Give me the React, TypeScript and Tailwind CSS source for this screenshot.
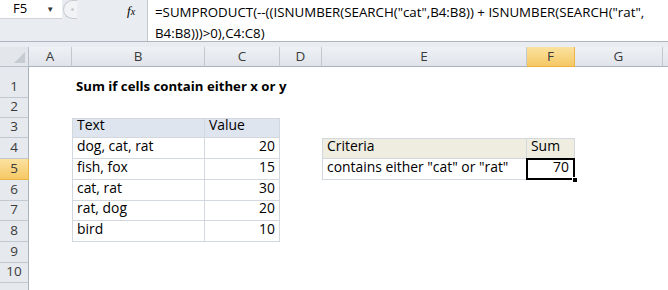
import React from "react";

const cols = [
  { k: "A", w: 43 },
  { k: "B", w: 133 },
  { k: "C", w: 75 },
  { k: "D", w: 42 },
  { k: "E", w: 205 },
  { k: "F", w: 48 },
  { k: "G", w: 88 },
  { k: "H", w: 40 },
];

const rowHeights = [31, 20, 20, 21, 21, 21, 20, 21, 21, 20, 20];

const font = { fontFamily: '"Open Sans", "Liberation Sans", sans-serif' };

function Cell({
  w,
  children,
  className = "",
}: {
  w: number;
  children?: React.ReactNode;
  className?: string;
}) {
  return (
    <div
      className={"shrink-0 flex items-end pb-[1px] px-[4px] overflow-visible whitespace-nowrap " + className}
      style={{ width: w }}
    >
      {children}
    </div>
  );
}

function rowContent(r: number) {
  const tblB = "border-r border-b border-[#d3d8df]";
  const data: Record<number, [string, string]> = {
    4: ["dog, cat, rat", "20"],
    5: ["fish, fox", "15"],
    6: ["cat, rat", "30"],
    7: ["rat, dog", "20"],
    8: ["bird", "10"],
  };
  return cols.map((c) => {
    let content: React.ReactNode = null;
    let cls = "";
    if (r === 1 && c.k === "B") {
      content = (
        <span className="font-bold text-[13.2px] text-black">
          Sum if cells contain either x or y
        </span>
      );
    }
    if (r === 3 && (c.k === "B" || c.k === "C")) {
      cls = "bg-[#dee5ef] border-r border-b border-[#d3d8df]" + (c.k === "B" ? " border-l border-t" : " border-t");
      content = <span>{c.k === "B" ? "Text" : "Value"}</span>;
    }
    if (r >= 4 && r <= 8 && c.k === "B") {
      cls = tblB + " border-l";
      content = <span>{data[r][0]}</span>;
    }
    if (r >= 4 && r <= 8 && c.k === "C") {
      cls = tblB + " justify-end";
      content = <span>{data[r][1]}</span>;
    }
    if (r === 4 && (c.k === "E" || c.k === "F")) {
      cls = "bg-[#eeede0] border-r border-b border-t border-[#d3d8df]" + (c.k === "E" ? " border-l" : "");
      content = <span>{c.k === "E" ? "Criteria" : "Sum"}</span>;
    }
    if (r === 5 && c.k === "E") {
      cls = tblB + " border-l";
      content = <span>contains either "cat" or "rat"</span>;
    }
    if (r === 5 && c.k === "F") {
      cls = "relative justify-end border-r border-b border-[#d3d8df]";
      content = (
        <>
          <span className="relative z-10 pr-[1px]">70</span>
          <div className="absolute left-[-1px] top-[-1px] right-[-1px] bottom-[-1px] border-2 border-black" />
          <div className="absolute right-[-4px] bottom-[-4px] w-[6px] h-[6px] bg-black border border-white z-20" />
        </>
      );
    }
    return (
      <Cell key={c.k} w={c.w} className={"text-[13.9px] text-black " + cls}>
        {content}
      </Cell>
    );
  });
}

export default function App() {
  return (
    <div className="w-[668px] h-[290px] overflow-hidden bg-white" style={font}>
      {/* Formula bar */}
      <div className="flex h-[42px] border-b border-[#aeb5be] bg-[#e9ecf0]">
        <div className="w-[147px] shrink-0 flex flex-col">
          <div className="flex h-[19px]">
            <div className="w-[62px] h-[19px] bg-white border-b border-[#cfd4da] flex items-center">
              <span className="ml-[13px] text-[13px] text-black">F5</span>
              <span className="ml-[19px] text-[8px] text-[#333]">▼</span>
            </div>
            <div className="flex-1 flex items-start relative">
              <div className="w-[14px] h-[19px] rounded-l-full border-l border-t border-b border-[#c8ccd2] bg-[#f2f3f5] flex items-center justify-center ml-[1px]">
                <div className="w-[3px] h-[3px] rounded-full bg-[#c9cdd3] ml-[3px]" />
              </div>
              <span className="absolute left-[65px] top-[1px] text-[13px] italic text-black" style={{ fontFamily: '"Liberation Serif", serif' }}>
                <span className="italic">f</span>
                <span className="text-[10px] italic">x</span>
              </span>
            </div>
          </div>
          <div className="flex-1" />
        </div>
        <div className="flex-1 bg-white border-l border-[#c3c8ce] pl-[7px] pt-[2px] text-[13.3px] leading-[21px] text-black whitespace-nowrap">
          <div>=SUMPRODUCT(--((ISNUMBER(SEARCH("cat",B4:B8)) + ISNUMBER(SEARCH("rat",</div>
          <div>B4:B8)))&gt;0),C4:C8)</div>
        </div>
      </div>
      <div className="h-[5px] bg-[#e9ecf0]" />
      {/* Column headers */}
      <div className="flex h-[20px] text-[13.5px] text-[#3b3b3b]">
        <div className="w-[29px] shrink-0 bg-[#e3e7ec] border-r border-b border-[#b8bfc8] relative overflow-hidden">
          <div
            className="absolute right-[3px] bottom-[3px] w-[11px] h-[11px] bg-[#c6cbd1]"
            style={{ clipPath: "polygon(100% 0, 100% 100%, 0 100%)" }}
          />
        </div>
        {cols.map((c) => (
          <div
            key={c.k}
            className={
              "shrink-0 flex items-center justify-center border-r border-b " +
              (c.k === "F"
                ? "bg-gradient-to-b from-[#fbe2a0] to-[#f5c863] border-[#e9b44a] border-b-[#f0b23c]"
                : "bg-gradient-to-b from-[#eef1f5] to-[#e0e4ea] border-[#c2c8cf] border-b-[#a9b3bf]")
            }
            style={{ width: c.w }}
          >
            {c.k === "H" ? "" : c.k}
          </div>
        ))}
      </div>
      {/* Rows */}
      {rowHeights.map((h, i) => {
        const r = i + 1;
        const sel = r === 5;
        return (
          <div key={r} className="flex" style={{ height: h }}>
            <div
              className={
                "w-[29px] shrink-0 flex items-end justify-center pb-[1px] text-[13.5px] text-[#3b3b3b] border-r border-b " +
                (sel
                  ? "bg-gradient-to-b from-[#fbe2a0] to-[#f5c863] border-[#e9b44a]"
                  : "bg-[#e6e9ee] border-[#c2c8cf] border-r-[#a9b3bf]")
              }
            >
              {r <= 10 ? r : ""}
            </div>
            {rowContent(r)}
          </div>
        );
      })}
    </div>
  );
}
